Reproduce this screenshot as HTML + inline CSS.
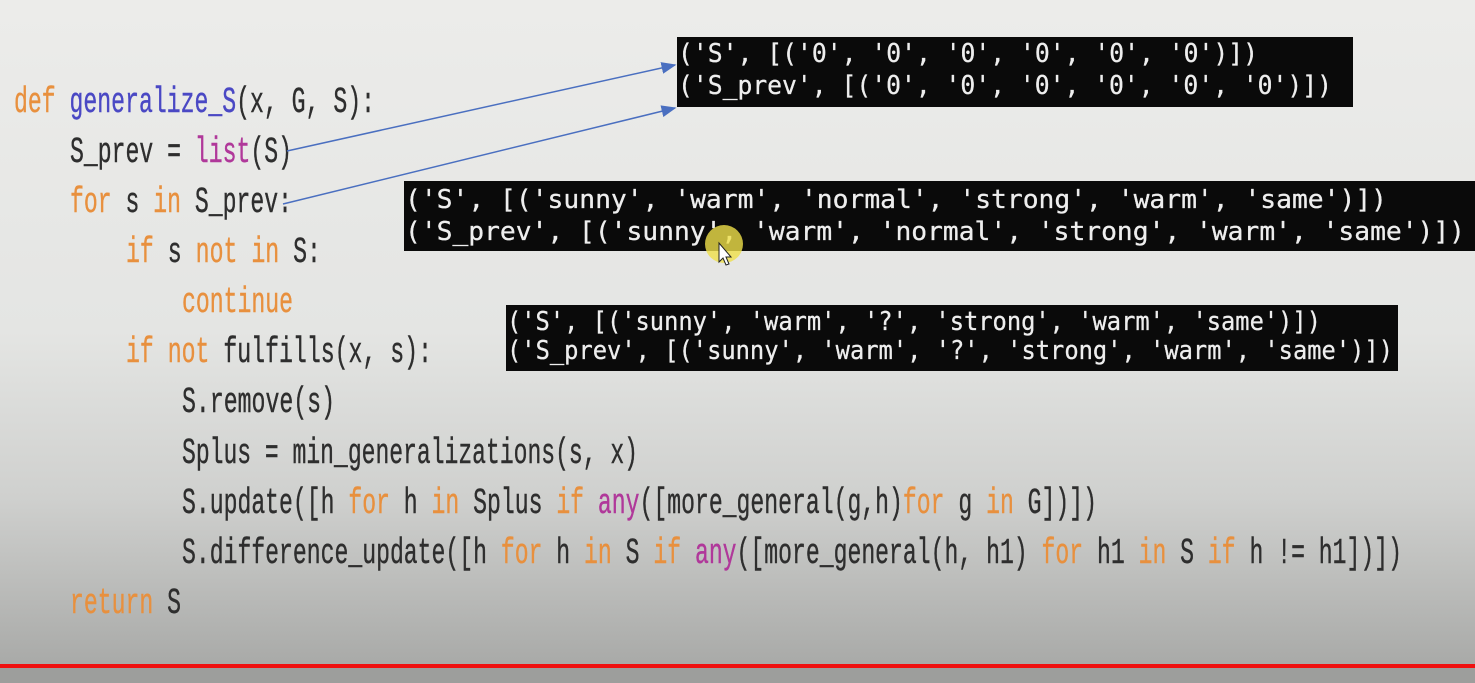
<!DOCTYPE html>
<html><head><meta charset="utf-8"><style>
html,body{margin:0;padding:0;width:1475px;height:683px;overflow:hidden}
svg{display:block}
.c{font-family:"Liberation Mono",monospace;font-size:36px;fill:#2e2e2e;stroke:#2e2e2e;stroke-width:0.4}
.k{fill:#e8903e;stroke:#e8903e}.f{fill:#4a48c4;stroke:#4a48c4}.p{fill:#b0389a;stroke:#b0389a}
.b{font-family:"DejaVu Sans Mono","Liberation Mono",monospace;font-size:26px;fill:#eee;stroke:#eee;stroke-width:0.3}
</style></head><body>
<svg width="1475" height="683" viewBox="0 0 1475 683" xmlns="http://www.w3.org/2000/svg">
<defs>
<linearGradient id="bg" x1="0" y1="0" x2="0" y2="1">
<stop offset="0" stop-color="#ececea"/><stop offset="0.5" stop-color="#e4e5e3"/><stop offset="0.75" stop-color="#cfd0ce"/><stop offset="1" stop-color="#a9aaa8"/>
</linearGradient>
<marker id="ah" markerWidth="10" markerHeight="8" refX="9" refY="4" orient="auto"><path d="M0,0 L10,4 L0,8 Z" fill="#4a6fc0"/></marker>
</defs>
<rect width="1475" height="664" fill="url(#bg)"/>
<rect y="664" width="1475" height="4" fill="#f01010"/>
<rect y="668" width="1475" height="15" fill="#9d9e9c"/>

<text class="c" x="14" y="112" textLength="361" lengthAdjust="spacingAndGlyphs"><tspan class="k">def</tspan> <tspan class="f">generalize_S</tspan>(x, G, S):</text>
<text class="c" x="70" y="162" textLength="222" lengthAdjust="spacingAndGlyphs">S_prev = <tspan class="p">list</tspan>(S)</text>
<text class="c" x="70" y="212" textLength="222" lengthAdjust="spacingAndGlyphs"><tspan class="k">for</tspan> s <tspan class="k">in</tspan> S_prev:</text>
<text class="c" x="126" y="262" textLength="195" lengthAdjust="spacingAndGlyphs"><tspan class="k">if</tspan> s <tspan class="k">not</tspan> <tspan class="k">in</tspan> S:</text>
<text class="c k" x="182" y="312" textLength="111" lengthAdjust="spacingAndGlyphs">continue</text>
<text class="c" x="126" y="362" textLength="306" lengthAdjust="spacingAndGlyphs"><tspan class="k">if</tspan> <tspan class="k">not</tspan> fulfills(x, s):</text>
<text class="c" x="182" y="412" textLength="153" lengthAdjust="spacingAndGlyphs">S.remove(s)</text>
<text class="c" x="182" y="463" textLength="456" lengthAdjust="spacingAndGlyphs">Splus = min_generalizations(s, x)</text>
<text class="c" x="182" y="513" textLength="915" lengthAdjust="spacingAndGlyphs">S.update([h <tspan class="k">for</tspan> h <tspan class="k">in</tspan> Splus <tspan class="k">if</tspan> <tspan class="p">any</tspan>([more_general(g,h)<tspan class="k">for</tspan> g <tspan class="k">in</tspan> G])])</text>
<text class="c" x="182" y="563" textLength="1220" lengthAdjust="spacingAndGlyphs">S.difference_update([h <tspan class="k">for</tspan> h <tspan class="k">in</tspan> S <tspan class="k">if</tspan> <tspan class="p">any</tspan>([more_general(h, h1) <tspan class="k">for</tspan> h1 <tspan class="k">in</tspan> S <tspan class="k">if</tspan> h != h1])])</text>
<text class="c" x="70" y="613" textLength="111" lengthAdjust="spacingAndGlyphs"><tspan class="k">return</tspan> S</text>

<line x1="287" y1="151" x2="675" y2="65" stroke="#4a6fc0" stroke-width="1.5" marker-end="url(#ah)"/>
<line x1="283" y1="204" x2="675" y2="108" stroke="#4a6fc0" stroke-width="1.5" marker-end="url(#ah)"/>

<rect x="677" y="37" width="676" height="70" fill="#0a0a0a"/>
<text class="b" x="678" y="62" textLength="580" lengthAdjust="spacingAndGlyphs">('S', [('0', '0', '0', '0', '0', '0')])</text>
<text class="b" x="678" y="94" textLength="654" lengthAdjust="spacingAndGlyphs">('S_prev', [('0', '0', '0', '0', '0', '0')])</text>

<rect x="404" y="181" width="1071" height="70" fill="#0a0a0a"/>
<text class="b" x="405" y="208" textLength="982" lengthAdjust="spacingAndGlyphs">('S', [('sunny', 'warm', 'normal', 'strong', 'warm', 'same')])</text>
<text class="b" x="405" y="240" textLength="1060" lengthAdjust="spacingAndGlyphs">('S_prev', [('sunny', 'warm', 'normal', 'strong', 'warm', 'same')])</text>

<rect x="506" y="305" width="892" height="66" fill="#0a0a0a"/>
<text class="b" x="507" y="330" textLength="814" lengthAdjust="spacingAndGlyphs">('S', [('sunny', 'warm', '?', 'strong', 'warm', 'same')])</text>
<text class="b" x="507" y="359" textLength="886" lengthAdjust="spacingAndGlyphs">('S_prev', [('sunny', 'warm', '?', 'strong', 'warm', 'same')])</text>

<circle cx="724" cy="244" r="19" fill="#efe04a" opacity="0.8"/>
<path d="M719,243 L719,262 L723,258 L726,265 L729,264 L726,257 L731,257 Z" fill="#fff" stroke="#222" stroke-width="1"/>
</svg>
</body></html>
